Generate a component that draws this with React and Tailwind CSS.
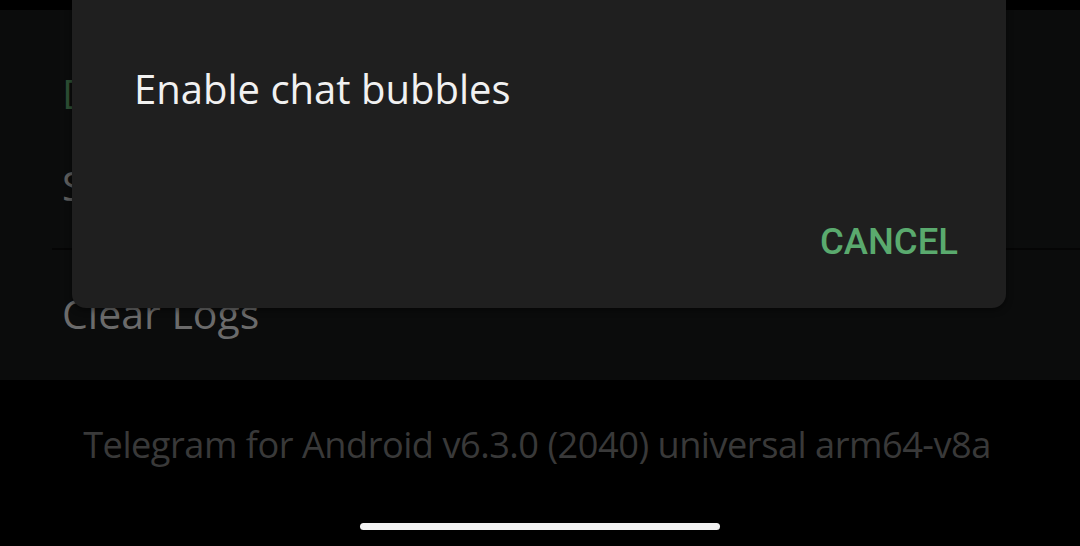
export default function App() {
  return (
    <div className="relative w-[1080px] h-[546px] bg-black overflow-hidden" style={{ fontFamily: '"Open Sans", Roboto, sans-serif' }}>
      <div className="h-[10px] bg-black" />
      <div className="h-[370px] bg-[#0b0c0c] flex flex-col">
        <div className="h-[150px] pl-[62px] pt-[58px] text-[40px] leading-[52px] text-[#2d4f33]">Data</div>
        <div className="h-[88px] pl-[62px] text-[40px] leading-[52px] text-[#5c5c5c]">Settings</div>
        <div className="ml-[52px] h-[2px] bg-[#050505]" />
        <div className="pl-[62px] pt-[37px] text-[41px] leading-[52px] text-[#6b6b6b]">Clear Logs</div>
      </div>
      <div className="flex justify-center pt-[40px] pr-[6px] text-[36.2px] leading-[48px] text-[#393939] tracking-[-0.5px]">
        Telegram for Android v6.3.0 (2040) universal arm64-v8a
      </div>
      <div className="absolute left-[360px] top-[523px] w-[360px] h-[7px] rounded-full bg-[#f2f2f2]" />
      <div className="absolute left-[72px] top-[-20px] w-[934px] h-[328px] bg-[#1f1f1f] rounded-[14px] shadow-[0_2px_6px_rgba(0,0,0,0.5)] flex flex-col">
        <div className="pl-[62px] pt-[85px] text-[40px] leading-[48px] text-[#f1f1f1]">Enable chat bubbles</div>
        <div className="flex-1" />
        <div className="flex justify-end pr-[48px] pb-[44px]">
          <span className="text-[36.5px] leading-[44px] font-medium text-[#5aaa6e]" style={{ fontFamily: 'Roboto, sans-serif' }}>CANCEL</span>
        </div>
      </div>
    </div>
  );
}
